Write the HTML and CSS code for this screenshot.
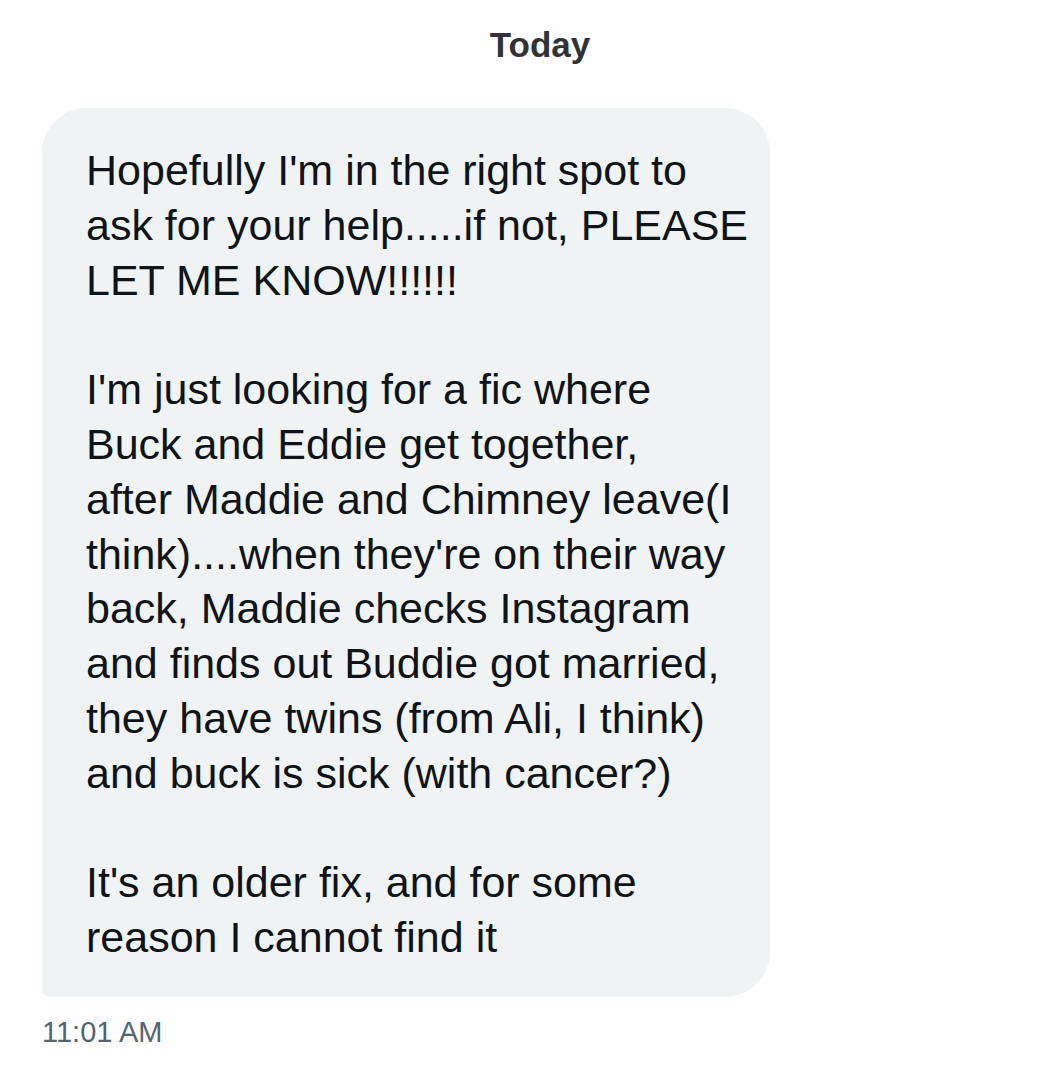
FILE: index.html
```html
<!DOCTYPE html>
<html lang="en">
<head>
    <meta charset="UTF-8">
    <meta name="viewport" content="width=device-width, initial-scale=1.0">
    <title>Messages</title>
    <link rel="stylesheet" href="styles.css">
</head>
<body>
    <main class="conversation">
        <div class="day-label">Today</div>

        <div class="message">
            <div class="bubble">
                <p>Hopefully I'm in the right spot to<br>ask for your help.....if not, PLEASE<br>LET ME KNOW!!!!!!</p>
                <p>I'm just looking for a fic where<br>Buck and Eddie get together,<br>after Maddie and Chimney leave(I<br>think)....when they're on their way<br>back, Maddie checks Instagram<br>and finds out Buddie got married,<br>they have twins (from Ali, I think)<br>and buck is sick (with cancer?)</p>
                <p>It's an older fix, and for some<br>reason I cannot find it</p>
            </div>
            <div class="time">11:01 AM</div>
        </div>
    </main>
</body>
</html>
```

FILE: styles.css
```css
* {
    box-sizing: border-box;
    margin: 0;
    padding: 0;
}

html, body {
    height: 100%;
}

body {
    font-family: 'Liberation Sans', Arial, sans-serif;
    background-color: #fff;
    color: #0f1419;
}

.conversation {
    display: flex;
    flex-direction: column;
    padding-top: 25px;
}

.day-label {
    font-size: 35px;
    line-height: 40px;
    font-weight: bold;
    color: #2f3336;
    text-align: center;
    padding-left: 28px;
    margin-bottom: 43px;
}

.message {
    display: flex;
    flex-direction: column;
    align-items: flex-start;
    padding-left: 42px;
}

.bubble {
    width: 728px;
    background-color: #eff3f4;
    border-radius: 45px 45px 45px 8px;
    padding: 35px 20px 32px 44px;
    font-size: 43px;
    line-height: 54.8px;
}

.bubble p + p {
    margin-top: 54.8px;
}

.time {
    margin-top: 19px;
    font-size: 29px;
    line-height: 33px;
    color: #536471;
}
```
